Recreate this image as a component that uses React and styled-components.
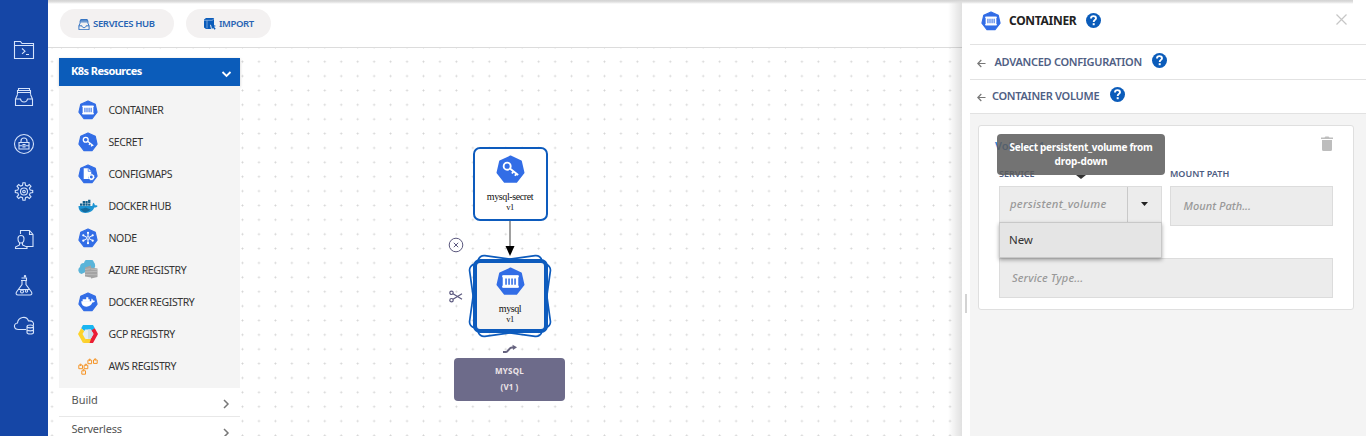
import React from "react";
import styled, { createGlobalStyle } from "styled-components";

const Global = createGlobalStyle`
  *{box-sizing:border-box}
  html,body{margin:0;overflow:hidden}
  body,button{font-family:"Noto Sans","Open Sans",sans-serif;font-stretch:87.5%}
  body{background:#fff}
`;
const Page = styled.div`display:flex;width:1366px;height:436px;overflow:hidden;position:relative;`;
const TopShade = styled.div`position:absolute;left:48px;width:1305px;top:0;height:4px;background:linear-gradient(#d2d2d2,#dedede 45%,rgba(255,255,255,0));z-index:9;`;
const Rail = styled.nav`width:48px;flex:none;background:#1546a6;display:flex;flex-direction:column;align-items:center;padding-top:38px;gap:23.2px;
  svg{display:block;flex:none}
  svg:last-child{margin-top:-9px}`;
const Main = styled.main`width:914px;flex:none;display:flex;flex-direction:column;position:relative;`;
const Toolbar = styled.header`height:48px;flex:none;border-bottom:1px solid #dcdcdc;display:flex;gap:12px;padding:9px 12px;`;
const Pill = styled.button`width:${p => p.$w}px;height:29px;border:0;border-radius:15px;background:#f3f1f1;display:flex;align-items:center;justify-content:flex-start;gap:3px;padding:0 0 0 18px;`;
const Text = styled.span`font-size:${p => p.$s || 11}px;font-weight:${p => p.$b || 400};letter-spacing:${p => p.$ls || 0}px;color:${p => p.$c || "#333"};font-style:${p => p.$i ? "italic" : "normal"};line-height:1.2;white-space:nowrap;`;
const Canvas = styled.div`flex:1;display:flex;position:relative;
  background-image:radial-gradient(circle,#d3d3d3 0.7px,transparent 1.25px);background-size:16.46px 14.38px;background-position:5.3px 6.5px;`;
const Edge = styled.div`width:11px;background-color:#fff;background-image:radial-gradient(circle,#d3d3d3 0.7px,transparent 1.25px);background-size:16.46px 14.38px;background-position:-4.2px 6.5px;`;
const Palette = styled.aside`width:181px;margin-top:10px;`;
const PaletteHead = styled.div`height:28px;background:#0b5cba;display:flex;align-items:center;justify-content:space-between;padding:0 8px 2px 12px;box-shadow:0 1px 3px #0003;
  svg{margin-top:5px}`;
const PaletteList = styled.div`background:#f4f4f4;height:302px;padding-top:8px;`;
const Item = styled.div`height:32px;display:flex;align-items:center;gap:10.500px;padding-left:19px;
  span{padding-top:1px}`;
const Section = styled.div`height:29px;background:#fff;border-bottom:1px solid #e8e8e8;display:flex;justify-content:space-between;padding:5px 9px 0 12.500px;
  svg{margin-top:6px}`;
const Graph = styled.div`position:absolute;left:0;top:0;`;
const Node = styled.div`position:absolute;left:${p => p.$x}px;top:${p => p.$y}px;width:75px;height:${p => p.$h}px;border:${p => p.$bw}px solid #0d5bbd;border-radius:7px;background:${p => p.$bg};display:flex;flex-direction:column;align-items:center;padding:${p => p.$pt}px 1px 0 0;
  svg{display:block;margin-bottom:7px;flex:none}`;
const NodeText = styled.span`font-family:"Liberation Serif",serif;font-size:${p => p.$s}px;line-height:11px;color:#111;letter-spacing:-.4px;white-space:nowrap;`;
const Floating = styled.svg`position:absolute;left:${p => p.$x}px;top:${p => p.$y}px;`;
const Tag = styled.div`position:absolute;left:406px;top:310px;width:111px;height:43px;border-radius:4px;background:#6d6b8a;display:flex;flex-direction:column;align-items:center;padding-top:8px;gap:6px;`;
const Shade = styled.div`position:absolute;right:0;top:0;width:14px;height:436px;background:linear-gradient(90deg,rgba(0,0,0,0),rgba(0,0,0,.12));`;
const Panel = styled.aside`width:404px;flex:none;background:#fff;display:flex;`;
const Grip = styled.div`width:8px;display:flex;flex-direction:column;padding:294px 0 0 3px;
  &::before{content:"";width:2px;height:19px;background:#d3d3d3}`;
const Body = styled.section`flex:1;display:flex;flex-direction:column;background:#f4f4f4;`;
const Row = styled.div`height:${p => p.$h}px;flex:none;background:#fff;border-bottom:1px solid #e2e2e2;display:flex;align-items:center;padding:0 0 1px ${p => p.$pl}px;gap:${p => p.$g}px;
  > svg{margin-top:${p => p.$it}px}`;
const Help = styled.span`display:flex;margin-top:${p => p.$t}px;margin-left:${p => p.$l}px;`;
const Close = styled.span`display:flex;margin:-5px 19px 0 auto;`;
const Card = styled.div`width:376px;height:185px;margin:11px 0 0 8px;border:1px solid #dfdfdf;border-radius:3px;background:#fff;position:relative;padding:10px 20px 0;`;
const CardTop = styled.div`display:flex;justify-content:space-between;height:33px;margin-left:-4px;
  span{padding-top:3px}`;
const Fields = styled.div`display:grid;grid-template-columns:163px 163px;column-gap:8px;`;
const Field = styled.div`display:flex;flex-direction:column;height:89px;`;
const FieldLabel = styled.div`height:17px;display:flex;`;
const Input = styled.div`height:40px;border:1px solid #dcdcdc;background:#ececec;display:flex;align-items:center;padding-left:${p => p.$pl}px;padding-bottom:${p => p.$pb || 0}px;`;
const Arrow = styled.span`width:34px;height:38px;margin:3px 0 0 auto;border-left:1px solid #c9c9c9;display:flex;align-items:center;justify-content:center;padding:0 1px 4px 0;`;
const Menu = styled.div`position:absolute;left:20px;top:96px;width:163px;height:36px;background:#e5e5e5;border:1px solid #c8c8c8;box-shadow:0 2px 4px #0005;display:flex;align-items:center;padding:0 0 1px 9px;`;
const Tooltip = styled.div`position:absolute;left:18px;top:8px;width:168px;height:41px;border-radius:4px;background:rgba(92,92,92,.86);display:flex;flex-direction:column;align-items:center;padding-top:7px;gap:2px;
  &::after{content:"";position:absolute;top:41px;left:79px;border:5px solid transparent;border-bottom:0;border-top:4px solid #333}`;

const Hept = ({ s = 20, children }) => (
  <svg width={s} height={s} viewBox="0 0 28 28">
    <path d="M14 1.3 24.2 6.1 26.7 17.1 19.7 26H8.3L1.3 17.1 3.8 6.1Z" fill="#326de6" stroke="#326de6" strokeWidth="1.6" strokeLinejoin="round" />
    {children}
  </svg>
);
const Box = p => <Hept {...p}><path d="M6.5 8h15v12h-15z" fill="#fff" /><path d="M6 9h16M6 19h16" stroke="#fff" strokeWidth="1.8" /><path d="M9.700 11v6.200M12.600 11v6.200M15.500 11v6.200M18.400 11v6.200" stroke="#326de6" strokeWidth="1.500" /></Hept>;
const Key = p => <Hept {...p}><g fill="none" stroke="#fff" strokeWidth="1.8"><circle cx="10.8" cy="10.8" r="3.4" /><path d="m13.4 13 8 6.3M17 15.7l-1.6 2.2M19.8 18l-1.5 2.1" /></g></Hept>;
const Config = p => <Hept {...p}><path d="M8 6h6.5l4 4v4a5 5 0 0 0-3.5 7H8Z" fill="#fff" /><path d="M14.3 6v4.3h4.2" fill="none" stroke="#326de6" /><circle cx="18.7" cy="18.3" r="3" fill="none" stroke="#fff" strokeWidth="1.9" /><circle cx="18.7" cy="18.3" r="4" fill="none" stroke="#fff" strokeDasharray="1.6 1.5" /></Hept>;
const NodeIcon = p => <Hept {...p}><path d="M14 6v16M6.8 10l14.4 8M6.8 18l14.4-8" stroke="#fff" strokeWidth="1.500" /><circle cx="14" cy="14" r="1.800" fill="#326de6" stroke="#fff" /><g fill="#fff"><circle cx="14" cy="6.8" r="1.5" /><circle cx="14" cy="21.2" r="1.5" /><circle cx="7.4" cy="10.3" r="1.5" /><circle cx="20.6" cy="10.3" r="1.5" /><circle cx="7.4" cy="17.7" r="1.5" /><circle cx="20.6" cy="17.7" r="1.5" /></g></Hept>;
const DockerReg = p => <Hept {...p}><path d="M4.500 13h14c.2-1.500 0-2.800.9-3.800 1.200.8 1.500 1.700 1.500 2.700 1.200 0 2 .2 2.800.7-.6 1.500-1.900 2-3.500 2.100-1.500 3.800-4.200 5.800-8.500 5.800-4.600 0-7-2.500-7.200-7.500Z" fill="#fff" /><path d="M6.500 10.200h10v3.500h-10zM11.500 7.500h3V11h-3z" fill="#fff" /></Hept>;
const Docker = () => (
  <svg width="20" height="20" viewBox="0 0 20 20">
    <path d="M.5 10h13.700c.6-1 .3-2.300 1.100-3.200 1.100.8 1.500 1.500 1.500 2.500 1 0 2 0 2.800.600-.6 1.300-1.900 1.500-3.300 1.600-1.500 3.700-4.300 5.400-8.600 5.400C3.200 16.900.5 14.500.5 10Z" fill="#1d93d2" />
    <path d="M2 7.500h2.300v2.300H2zM4.700 7.500H7v2.300H4.700zM7.400 7.500h2.300v2.300H7.400zM10.100 7.500h2.300v2.300h-2.300zM4.700 5H7v2.200H4.700zM7.400 5h2.300v2.200H7.400zM10.100 3.800h2.300v3.200h-2.300z" fill="#155f8c" />
    <path d="M1.500 12.500c3 .8 5-.5 6-1l5 2c-2 2.500-5 3-7 2.500" fill="#156a9d" />
  </svg>
);
const Azure = () => (
  <svg width="20" height="20" viewBox="0 0 20 20">
    <path d="M3.500 14A3.900 3.900 0 0 1 2 7a4 4 0 0 1 4-4 5.200 5.200 0 0 1 10-.5c1 .8 1.300 2.500 1 5Z" fill="#59b4d9" />
    <path d="m7 7.500 6-2V17.500l-6-1ZM13 7.500l6.500 1v8.500l-6.500 1.500Z" fill="#a3a3a3" />
    <path d="m7 9.500 5.500-.8M7 12l12.500-.7M7 14.500l12.500.3M13 9l6.500.7" stroke="#c9c9c9" strokeWidth=".6" />
  </svg>
);
const Gcp = () => (
  <svg width="20" height="20" viewBox="0 0 20 20">
    <path d="M5 1h10l1.800 3.200-3 3H6.500L3.200 4.200Z" fill="#19b5f1" />
    <path d="M3.200 4.200 6.500 7.200 5.300 10 8 15l-3 4-5-9Z" fill="#fdd32b" />
    <path d="m16.800 4.200 3.200 5.800-5 9h-4l1-4 3-5-2-3.500Z" fill="#eb1d35" />
    <path d="M5 19h6.500l1.500-4H7.500Z" fill="#fbd02c" />
    <path d="M7.200 5.500h5.600l2.700 4.500-2.700 4.700H7.200L4.500 10Z" fill="#e4eef4" /><path d="M10 5.500h2.800l2.700 4.500-2.700 4.700H10Z" fill="#c9dce8" />
  </svg>
);
const Aws = () => (
  <svg width="20" height="20" viewBox="0 0 20 20" fill="none" stroke="#f59426" strokeWidth="1">
    {[[.5, 8.500], [5.800, 8.500], [9.600, 3.500], [15.200, 3.200], [3.500, 14]].map(([x, y], i) => <path key={i} transform={`translate(${x} ${y})`} d="M1 .8H.3v3.400h3.700V.8h-.8M1.400-.3h1.300v1.200H1.400Z" />)}
  </svg>
);
const I = ({ children, s = 24 }) => <svg width={s} height="24" viewBox="0 0 24 24" fill="none" stroke="#d5e3fb" strokeWidth="1.1">{children}</svg>;
const tray = <><path d="M5.500 9.500V5.500h13v4M6.500 5.500v-2h11v2M6 7.500h12" /><path d="M5.500 9.500 3.500 14v6.500h17V14l-2-4.500M3.500 14h5c.3 2 1.500 3 3.500 3s3.200-1 3.500-3h5" /></>;
const Q = () => <svg width="15" height="15" viewBox="0 0 15 15"><circle cx="7.500" cy="7.500" r="7.500" fill="#0b5cba" /><path d="M5 5.400c0-3 5-3 5-.2 0 1.700-2.300 1.700-2.300 3.700" fill="none" stroke="#fff" strokeWidth="1.900" /><path d="M6.700 10.200h2V12.200h-2z" fill="#fff" /></svg>;
const Back = () => <svg width="9" height="9" viewBox="0 0 9 9" fill="none" stroke="#777" strokeWidth="1.200"><path d="M8.500 4.500H1M4.300 1 .8 4.500 4.300 8" /></svg>;
const Chev = ({ down }) => down
  ? <svg width="11" height="8" viewBox="0 0 11 8"><path d="m1.500 2 4 4 4-4" fill="none" stroke="#fff" strokeWidth="1.800" /></svg>
  : <svg width="9" height="10" viewBox="0 0 9 10"><path d="m2 1 4 4-4 4" fill="none" stroke="#777" strokeWidth="1.500" /></svg>;

const items = [["CONTAINER", <Box />], ["SECRET", <Key />], ["CONFIGMAPS", <Config />], ["DOCKER HUB", <Docker />], ["NODE", <NodeIcon />], ["AZURE REGISTRY", <Azure />], ["DOCKER REGISTRY", <DockerReg />], ["GCP REGISTRY", <Gcp />], ["AWS REGISTRY", <Aws />]];

export default function App() {
  return (
    <Page>
      <Global />
      <TopShade />
      <Rail>
        <I><path d="M2.500 20.500v-17h6l1.500 2h11.500v15ZM2.500 7.500h19M10 10.500l3 2.700-3 2.700M14 16.500h3" /></I>
        <I>{tray}</I>
        <I><circle cx="12" cy="12" r="9.500" /><path d="M7 10.500h10v6.500H7ZM9 10.500V9a3 3 0 0 1 6 0v1.500M7 13.700h3M14 13.700h3M11 12.500h2v2.500h-2Z" /></I>
        <I><path d="m10.500 5.300.4-2.500h2.200l.4 2.500 1.800.8 2-1.600 1.700 1.700-1.600 2 .8 1.800 2.500.4v2.200l-2.500.4-.8 1.800 1.600 2-1.700 1.700-2-1.600-1.800.8-.4 2.500h-2.200l-.4-2.500-1.800-.8-2 1.600L5 16.800l1.600-2-.8-1.800-2.500-.4v-2.200l2.500-.4.8-1.800-1.600-2 1.700-1.700 2 1.600Z" /><circle cx="12" cy="11.500" r="3.500" /><circle cx="12" cy="11.500" r="1.300" /></I>
        <I><path d="M8.500 7V3.500h9l3.500 4v12h-7M17.500 3.500v4H21M6 11.500c0-4 6-4 6 0 0 2-1 4.500-3 4.500s-3-2.500-3-4.500ZM7.500 16v2L3.500 20v1.500H15V20l-4.500-2v-2" /></I>
        <I><path d="M10 6.500v4L4.500 18c-1 2 0 3 1.500 3h12c1.500 0 2.500-1 1.500-3L14 10.500v-4M9 6.500h6M9.500 4h5v2.500M6.500 15.500h11" /><circle cx="10" cy="17.500" r="1.500" /><circle cx="14.500" cy="17" r="1.200" /><circle cx="13" cy="2.300" r=".7" /></I>
        <I><path d="M14 17.500H6.500c-5 0-5.500-6-1-6.500.5-6 9-8 11-2 4-.5 5.500 1.500 5 4.500M15 14.500v6c0 2 6.500 2 6.500 0v-6c0-2-6.500-2-6.500 0ZM15 14.500c0 1.800 6.500 1.800 6.500 0M15 17.500c0 1.800 6.500 1.800 6.500 0" /></I>
      </Rail>
      <Main>
        <Toolbar>
          <Pill $w={114}><svg width="12" height="12" viewBox="2 1 20 20" fill="none" stroke="#2268bd" strokeWidth="1.500">{tray}</svg><Text $s={9.5} $b={600} $c="#2864b4" $ls={-0.330}>SERVICES HUB</Text></Pill>
          <Pill $w={85}><svg width="12" height="12" viewBox="0 0 12 12"><path d="m0 1.500 2-1.500h8v7l-1.200 1.200L6 6.500l1 4.500H2L0 9.500Z" fill="#0b5cba" /><path d="M0 2.300h8.500l1.500-2M3 2.300v8" stroke="#b9d0ee" strokeWidth=".6" fill="none" /><path d="m7 6 5 2-2 .8 1.700 2-1.200 1-1.500-2-1.100 1.500Z" fill="#0b5cba" /></svg><Text $s={9.5} $b={600} $c="#2864b4" $ls={-0.400}>IMPORT</Text></Pill>
        </Toolbar>
        <Canvas>
          <Edge />
          <Palette>
            <PaletteHead><Text $s={11} $b={700} $c="#fff" $ls={-0.550}>K8s Resources</Text><Chev down /></PaletteHead>
            <PaletteList>{items.map(([t, icon]) => <Item key={t}>{icon}<Text $s={10.5} $ls={-0.390}>{t}</Text></Item>)}</PaletteList>
            <Section><Text $c="#555">Build</Text><Chev /></Section>
            <Section><Text $c="#555" $ls={-0.250}>Serverless</Text><Chev /></Section>
          </Palette>
          <Graph>
            <Floating $x={456} $y={172} width="12" height="38" viewBox="0 0 12 38"><path d="M6 0v30" stroke="#888" strokeWidth="1.600" /><path d="M1.500 26h9L6 36Z" fill="#000" /></Floating>
            <Floating $x={416} $y={202} width="92" height="92" viewBox="0 0 92 92"><g fill="none" stroke="#0d5bbd" strokeWidth="1.700"><rect x="9.500" y="9.500" width="73" height="73" rx="6" transform="rotate(8 46 46)" /><rect x="9.500" y="9.500" width="73" height="73" rx="6" transform="rotate(-8 46 46)" /></g></Floating>
            <Node $x={425} $y={99} $h={74} $bw={2} $bg="#fff" $pt={6}><Key s={29} /><NodeText $s={10}>mysql-secret</NodeText><NodeText $s={8.5}>v1</NodeText></Node>
            <Node $x={425} $y={211} $h={74} $bw={4} $bg="#f4f4f4" $pt={4}><Box s={29} /><NodeText $s={10}>mysql</NodeText><NodeText $s={8.5}>v1</NodeText></Node>
            <Floating $x={400} $y={189} width="16" height="16" viewBox="0 0 16 16" fill="none" stroke="#5b587e"><circle cx="8" cy="8" r="6.800" fill="#fff" /><path d="m5.800 5.800 4.400 4.400m0-4.400-4.400 4.400" /></Floating>
            <Floating $x={401} $y={242} width="14" height="13" viewBox="0 0 14 13" fill="none" stroke="#5b587e" strokeWidth="1.200"><circle cx="2.500" cy="2.800" r="1.700" /><circle cx="2.500" cy="10.200" r="1.700" /><path d="m4 3.800 9 5.500M4 9.200l9-5.500" /></Floating>
            <Floating $x={455} $y={296} width="15" height="10" viewBox="0 0 15 10" fill="none" stroke="#66637f" strokeWidth="2"><path d="M0 8h3c2 0 3-4.500 6-4.500h2" /><path d="M9.500.8 14 3.300 10 6Z" fill="#66637f" stroke="none" /></Floating>
            <Tag><Text $s={8} $b={700} $c="#eee5e8" $ls={0.200}>MYSQL</Text><Text $s={8} $b={700} $c="#eee5e8" $ls={0.100}>(V1 )</Text></Tag>
          </Graph>
        </Canvas>
        <Shade />
      </Main>
      <Panel>
        <Grip />
        <Body>
          <Row $h={45} $pl={11} $g={8} $it={-2}><Box s={20} /><Text $s={12} $b={700} $c="#222" $ls={-0.300}>CONTAINER</Text><Help $l={2} $t={-3}><Q /></Help><Close><svg width="11" height="11" viewBox="0 0 11 11"><path d="m.5.500 10 10m0-10-10 10" stroke="#c6c6c6" strokeWidth="1.200" /></svg></Close></Row>
          <Row $h={35} $pl={7} $g={8.5} $it={4}><Back /><Text $s={11} $b={600} $c="#4f6084" $ls={-0.290}>ADVANCED CONFIGURATION</Text><Help $l={2} $t={-3}><Q /></Help></Row>
          <Row $h={34} $pl={7} $g={6} $it={2}><Back /><Text $s={11} $b={600} $c="#4f6084" $ls={-0.290}>CONTAINER VOLUME</Text><Help $l={5} $t={-4}><Q /></Help></Row>
          <Card>
            <CardTop><Text $s={11} $b={600} $c="#1c78d2">Volume 1</Text><svg width="12" height="16" viewBox="0 0 12 16" fill="#bdbdbd"><path d="M0 1.500h3.500L4.500.5h3l1 1H12V3H0zM1 4h10V13.500q0 1.500-1.500 1.500h-7Q1 15 1 13.500Z" /></svg></CardTop>
            <Fields>
              <Field><FieldLabel><Text $s={9} $b={600} $c="#4c5b80">SERVICE</Text></FieldLabel><Input $pl={10} $pb={4}><Text $s={11.3} $i $b={500} $c="#999" $ls={0.240}>persistent_volume</Text><Arrow><svg width="7" height="4"><path d="M0 0h7L3.500 4Z" fill="#222" /></svg></Arrow></Input></Field>
              <Field><FieldLabel><Text $s={9} $b={600} $c="#4c5b80">MOUNT PATH</Text></FieldLabel><Input $pl={12.5}><Text $i $b={500} $c="#999" $ls={0.030}>Mount Path...</Text></Input></Field>
            </Fields>
            <Input $pl={12}><Text $i $b={500} $c="#999" $ls={0.150}>Service Type...</Text></Input>
            <Menu><Text $s={11.5} $ls={-0.1}>New</Text></Menu>
            <Tooltip><Text $s={10} $b={700} $c="#fff" $ls={-0.300}>Select persistent_volume from</Text><Text $s={10} $b={700} $c="#fff" $ls={-0.100}>drop-down</Text></Tooltip>
          </Card>
        </Body>
      </Panel>
    </Page>
  );
}
